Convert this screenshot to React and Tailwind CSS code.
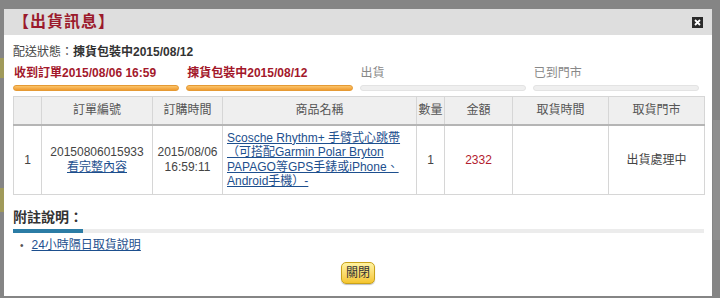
import React from 'react'

const steps = [
  { label: '收到訂單2015/08/06 16:59', done: true },
  { label: '揀貨包裝中2015/08/12', done: true },
  { label: '出貨', done: false },
  { label: '已到門市', done: false },
]

const heads = ['', '訂單編號', '訂購時間', '商品名稱', '數量', '金額', '取貨時間', '取貨門市']
const widths = ['w-[28px]', 'w-[111px]', 'w-[70px]', 'w-[194px]', 'w-[28px]', 'w-[68px]', 'w-[96px]', 'w-[96px]']

const App = () => {
  return (
    <div
      className="relative w-[720px] h-[298px] overflow-hidden bg-[#858585] pl-[4px] pt-[9px]"
      style={{ fontFamily: '"Liberation Sans", Arial, "Noto Sans CJK TC", sans-serif' }}
    >
      {/* bits of the page under the overlay */}
      <div className="absolute left-0 top-[58px] w-[4px] h-[20px] bg-[#a09a5a]" />
      <div className="absolute left-0 top-[188px] w-[4px] h-[24px] bg-[#a09a5a]" />
      <div className="absolute right-0 top-[120px] w-[7px] h-[120px] bg-[#8f8f8f]" />

      <div className="relative w-[708px] h-[287px] bg-white flex flex-col">
        <div className="h-[26px] bg-[#dedede] flex items-center justify-between pl-[9px] pr-[9px]">
          <span className="text-[16px] font-bold text-[#9b1a2c] tracking-[1px]">【出貨訊息】</span>
          <span className="w-[11px] h-[11px] bg-[#2a2a2a] flex items-center justify-center">
            <svg width="7" height="7" viewBox="0 0 7 7">
              <path d="M1 1L6 6M6 1L1 6" stroke="#fff" strokeWidth="1.8" />
            </svg>
          </span>
        </div>

        <div className="px-[9px]">
          <div className="mt-[10px] text-[12px] leading-[15px] text-[#444]">
            配送狀態：<span className="font-bold text-[#333]">揀貨包裝中2015/08/12</span>
          </div>

          <div className="mt-[6px] flex gap-[7px] w-[686px]">
            {steps.map((s) => (
              <div key={s.label} className="flex-1">
                <div
                  className={
                    s.done
                      ? 'text-[12px] leading-[15px] font-bold text-[#a3182b] pl-[1px]'
                      : 'text-[12px] leading-[15px] text-[#888] pl-[1px]'
                  }
                >
                  {s.label}
                </div>
                <div
                  className={
                    s.done
                      ? 'mt-[4px] h-[6px] rounded-full bg-gradient-to-b from-[#fbc56a] to-[#ef9b2c] border border-[#e59a34]'
                      : 'mt-[4px] h-[6px] rounded-full bg-[#efefef] border border-[#e3e3e3]'
                  }
                />
              </div>
            ))}
          </div>

          <table className="mt-[5px] table-fixed border-collapse w-[691px] text-[12px] text-[#444]">
            <thead>
              <tr className="h-[28px] bg-[#efefef] border-b-2 border-[#b5b5b5]">
                {heads.map((h, i) => (
                  <th key={i} className={`${widths[i]} font-normal text-[#555] border border-[#d6d6d6] text-center`}>
                    {h}
                  </th>
                ))}
              </tr>
            </thead>
            <tbody>
              <tr className="h-[70px]">
                <td className="border border-[#d6d6d6] text-center">1</td>
                <td className="border border-[#d6d6d6] text-center leading-[15px]">
                  20150806015933
                  <br />
                  <a href="#" className="text-[#1d4f8e] underline">看完整內容</a>
                </td>
                <td className="border border-[#d6d6d6] text-center leading-[15px]">
                  2015/08/06
                  <br />
                  16:59:11
                </td>
                <td className="border border-[#d6d6d6] px-[4px] leading-[14.5px]">
                  <a href="#" className="text-[#1d4f8e] underline">
                    Scosche Rhythm+ 手臂式心跳帶（可搭配Garmin Polar Bryton PAPAGO等GPS手錶或iPhone、Android手機）-
                  </a>
                </td>
                <td className="border border-[#d6d6d6] text-center">1</td>
                <td className="border border-[#d6d6d6] text-center text-[#b3202e]">2332</td>
                <td className="border border-[#d6d6d6]" />
                <td className="border border-[#d6d6d6] text-center">出貨處理中</td>
              </tr>
            </tbody>
          </table>

          <div className="mt-[14px] text-[14px] leading-[17px] font-bold text-[#333]">附註說明：</div>
          <div className="mt-[3px] h-[4px] w-[691px] bg-[#ececec] flex">
            <div className="w-[70px] h-full bg-[#2b7ca5]" />
          </div>

          <ul className="mt-[5px] pl-[7px] text-[12px] leading-[15px]">
            <li className="flex items-center gap-[8px]">
              <span className="text-[#555] text-[10px]">•</span>
              <a href="#" className="text-[#1d4f8e] underline">24小時隔日取貨說明</a>
            </li>
          </ul>

          <div className="mt-[9px] flex justify-center">
            <button className="h-[22px] px-[4px] rounded-[5px] border border-[#c9a21a] bg-gradient-to-b from-[#fff3a0] to-[#f5c52a] text-[12px] text-[#333] shadow-[0_1px_1px_rgba(0,0,0,0.25)]">
              關閉
            </button>
          </div>
        </div>
      </div>
    </div>
  )
}

export default App
